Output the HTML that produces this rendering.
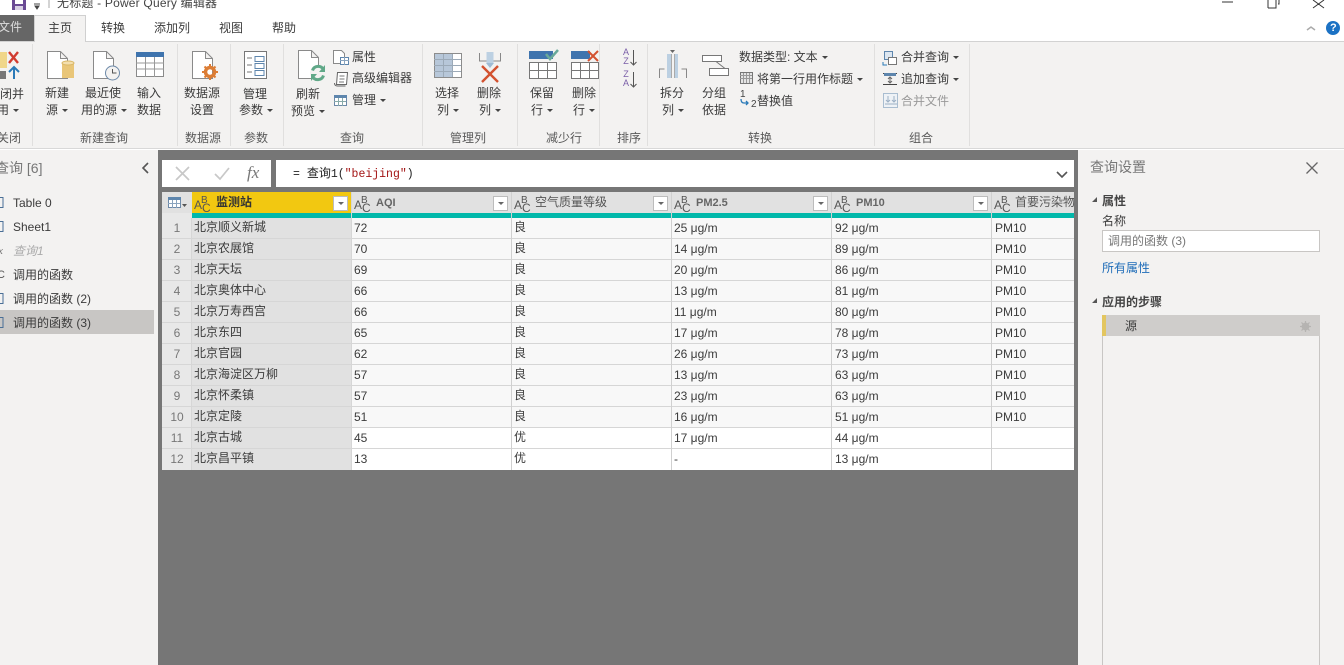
<!DOCTYPE html>
<html lang="zh"><head><meta charset="utf-8"><title>Power Query</title>
<style>
html,body{margin:0;padding:0;width:1344px;height:665px;overflow:hidden;background:#fff}
body{position:relative;font:12px/16px "Liberation Sans","Noto Sans CJK SC",sans-serif;color:#3b3b3b}
.a{position:absolute}
.t{position:absolute;white-space:nowrap}
.c{position:absolute;white-space:nowrap;transform:translateX(-50%)}
.g{color:#5a5a5a}
.sep{position:absolute;top:44px;height:102px;width:1px;background:#e0dfde}
svg{position:absolute;overflow:visible}
.abc{position:absolute;width:20px;height:18px;font-size:12px;color:#555}
.abc i{position:absolute;font-style:normal;line-height:11px}
.row{position:absolute;left:162px;width:912px;height:20px;border-bottom:1px solid #d6d6d6}
.drop{position:absolute;top:196px;width:15px;height:15px;background:#fff;border:1px solid #bcbcbc;box-sizing:border-box}
.drop:after{content:"";position:absolute;left:4px;top:5px;border:3px solid transparent;border-top:3px solid #666}
.tri{display:inline-block;border:3px solid transparent;border-top:3px solid #444;margin-left:4px;vertical-align:-1px}
</style></head><body>

<!-- title bar -->
<svg style="left:0;top:0" width="1344" height="15"><rect x="12" y="0" width="14" height="10" fill="#6a4a94"/><rect x="15" y="0" width="8" height="4" fill="#fff"/><rect x="15" y="6" width="8" height="4" fill="#d8d0e4"/><path d="M34 4h6M35 6l2 3 2-3z" stroke="#444" fill="#444"/><path d="M49 0v8" stroke="#aaa"/><path d="M1222 2h11M1268 8V0M1268 8h8V0M1278 4h1V0M1313 0l11 8M1324 0l-11 8" stroke="#333" fill="none"/></svg>
<div class="t" style="left:57px;top:-5px;font-size:12px;line-height:16px;color:#444;letter-spacing:.2px">无标题 - Power Query 编辑器</div>

<!-- tabs -->
<div class="a" style="left:0;top:15px;width:34px;height:26px;background:#666"></div>
<div class="t" style="left:-2px;top:19px;color:#ddd">文件</div>
<div class="a" style="left:34px;top:15px;width:52px;height:27px;background:#f3f2f1;border:1px solid #d0d0d0;border-bottom:0;box-sizing:border-box;z-index:2"></div>
<div class="t" style="left:48px;top:20px;z-index:3">主页</div>
<div class="t" style="left:101px;top:20px">转换</div>
<div class="t" style="left:154px;top:20px">添加列</div>
<div class="t" style="left:219px;top:20px">视图</div>
<div class="t" style="left:272px;top:20px">帮助</div>
<svg style="left:1300px;top:20px" width="44" height="20"><path d="M7 10l4-3 4 3" stroke="#aaa" stroke-width="1.5" fill="none"/><circle cx="33" cy="8" r="7" fill="#1c72c4"/></svg>
<div class="t" style="left:1330px;top:20px;color:#fff;font-weight:bold;font-size:11px">?</div>

<!-- ribbon -->
<div class="a" style="left:0;top:41px;width:1344px;height:108px;background:#f3f2f1;border-top:1px solid #d2d2d2;border-bottom:1px solid #d8d8d8;box-sizing:border-box"></div>
<div class="sep" style="left:32px"></div><div class="sep" style="left:177px"></div><div class="sep" style="left:230px"></div><div class="sep" style="left:283px"></div><div class="sep" style="left:422px"></div><div class="sep" style="left:517px"></div><div class="sep" style="left:599px"></div><div class="sep" style="left:647px"></div><div class="sep" style="left:874px"></div><div class="sep" style="left:969px"></div>

<svg style="left:0;top:42px" width="980" height="75" fill="none" stroke="#8a8a8a">
 <!-- close -->
 <rect x="0" y="10" width="7" height="16" fill="#f0d68a" stroke="none"/><rect x="0" y="29" width="6" height="8" fill="#777" stroke="none"/>
 <path d="M9 10l9 11M18 10l-9 11" stroke="#d13c30" stroke-width="2.4"/>
 <path d="M14 37V26M9 30l5-5 5 5" stroke="#2a7ab8" stroke-width="2"/>
 <!-- new source -->
 <path d="M47.500 9.500h13l7 7v20h-20zM60.500 9.500v7h7" fill="#fff"/><path d="M62 21h12v15H62z" fill="#e9c678" stroke="none"/><ellipse cx="68" cy="21" rx="6" ry="2" fill="#f4dfae" stroke="#d9b766"/>
 <!-- recent -->
 <path d="M93.500 9.500h13l7 7v20h-20zM106.500 9.500v7h7" fill="#fff"/><circle cx="112.500" cy="31" r="7" fill="#f3f2f1" stroke="#6d89a8"/><path d="M112.500 27v4h4" stroke="#555"/>
 <!-- enter data -->
 <rect x="136.500" y="10.500" width="27" height="24" fill="#fff"/><rect x="136" y="10" width="28" height="5" fill="#3f74ae" stroke="none"/><path d="M136 21h28M136 27h28M145.500 15v20M154.500 15v20" stroke="#999"/>
 <!-- datasource -->
 <path d="M192.500 9.500h13l7 7v20h-20zM205.500 9.500v7h7" fill="#fff"/><circle cx="210" cy="30" r="4.500" stroke="#dc7d35" stroke-width="3.500"/><path d="M210 22v3M210 35v3M202 30h3M215 30h3M204.500 24.500l2 2M213.500 33.500l2 2M204.500 35.500l2-2M213.500 26.500l2-2" stroke="#dc7d35" stroke-width="2"/>
 <!-- params -->
 <rect x="244.500" y="9.500" width="22" height="27" fill="#fff" stroke="#777"/><path d="M255 14.500h9v5h-9zM255 21.500h9v5h-9zM255 28.500h9v5h-9z" stroke="#5e86ad"/><path d="M247 16h5M247 23h5M247 30h5" stroke="#777"/>
 <!-- refresh -->
 <path d="M298.500 8.500h13l7 7v21h-20zM311.500 8.500v7h7" fill="#fff"/><circle cx="318" cy="31" r="8" fill="#f3f2f1" stroke="none"/><path d="M312.500 28.500a6 6 0 0 1 11-1M323.500 33.500a6 6 0 0 1-11 1" stroke="#60a888" stroke-width="3"/><path d="M325 23v7h-6zM311 39v-7h6z" fill="#60a888" stroke="none"/>
 <!-- properties -->
 <path d="M333.500 8.500h8l3 3v10h-11z" fill="#fff"/><rect x="340.500" y="15.500" width="8" height="7" fill="#fff" stroke="#5e86ad"/><path d="M340 18.500h9M344.500 15v8" stroke="#8aa4be"/>
 <!-- advanced editor -->
 <path d="M337.500 30.500h10l-1 12h-10z" fill="#fff" stroke="#666"/><path d="M334.500 41c0 2 1 3 3 3h8" stroke="#666"/><path d="M339.500 34h5M339.500 37h5M339 40h5" stroke="#777"/>
 <!-- manage -->
 <rect x="334.500" y="53.500" width="12" height="10" fill="#fff" stroke="#6d89a8"/><rect x="334" y="53" width="13" height="3" fill="#5e86ad" stroke="none"/><path d="M338.500 56v8M342.500 56v8M334 59.500h12" stroke="#8aa"/>
 <!-- choose columns -->
 <rect x="434.500" y="11.500" width="27" height="24" fill="#fff" stroke="#8c8c8c"/><rect x="435" y="12" width="17" height="23" fill="#b7c7d9" stroke="none"/><path d="M434 17.500h27M434 23.500h27M434 29.500h27M443.500 12v23M452.500 12v23" stroke="#9caab8"/>
 <!-- remove columns -->
 <path d="M479.500 11v8h21v-8" stroke="#888"/><path d="M490 10v11" stroke="#bcd0e2" stroke-width="7"/><path d="M486 21l4 5 4-5" fill="#9fbbd4" stroke="none"/><path d="M482 40l16-16M482 24l16 16" stroke="#d35230" stroke-width="2.400"/>
 <!-- keep rows -->
 <rect x="529" y="9" width="24" height="8" fill="#3f74ae" stroke="none"/><path d="M546 12l4 5 8-9" stroke="#69a99a" stroke-width="2.500"/><rect x="529.500" y="20.500" width="27" height="16" fill="#fff" stroke="#777"/><path d="M529 28.500h27M538.500 20v16M547.500 20v16" stroke="#777"/>
 <!-- remove rows -->
 <rect x="571" y="9" width="19" height="8" fill="#3f74ae" stroke="none"/><path d="M588 9l10 10M598 9l-10 10" stroke="#d35230" stroke-width="2"/><rect x="571.500" y="20.500" width="27" height="16" fill="#fff" stroke="#777"/><path d="M571 28.500h27M580.500 20v16M589.500 20v16" stroke="#777"/>
 <!-- sort arrows -->
 <path d="M633.500 8v15M630.500 20l3 3 3-3M633.500 30v15M630.500 42l3 3 3-3" stroke="#555"/>
 <!-- split -->
 <path d="M659.500 36V27h5M686.500 36V27h-5" stroke="#888"/><rect x="667" y="12" width="4" height="24" fill="#bcd0e2" stroke="none"/><rect x="674" y="12" width="4" height="24" fill="#bcd0e2" stroke="none"/><path d="M671.500 12v24M674.500 12v24" stroke="#aaa"/><path d="M670 8h5l-2.500 3z" fill="#666" stroke="none"/>
 <!-- group -->
 <rect x="702.500" y="13.500" width="19" height="6" fill="#fff" stroke="#777"/><rect x="709.500" y="26.500" width="19" height="7" fill="#fff" stroke="#777"/><path d="M716 19.500l9 7" stroke="#777"/>
 <!-- first row header -->
 <rect x="740.500" y="30.500" width="12" height="11" fill="#e4e4e4" stroke="#777"/><path d="M740 33.500h12M743.500 31v10M746.500 31v10M749.500 31v10M740 36.500h12" stroke="#999"/>
 <path d="M741 57c0 3 1 4 3 4h4M746 59l2 2-2 2" stroke="#2a7ab8" stroke-width="1.300"/>
 <!-- combine -->
 <rect x="884.500" y="9.500" width="8" height="8" stroke="#5e86ad" fill="#dce6f0"/><rect x="888.500" y="15.500" width="8" height="7" stroke="#777" fill="#fff"/><path d="M883 20v3h4" stroke="#2a7ab8"/>
 <path d="M883 31.500h14M883 42.500h14" stroke="#444"/><rect x="884" y="31" width="12" height="3" fill="#5e86ad" stroke="none"/><path d="M890 35v6M888 37l2-2 2 2M888 39l2 2 2-2" stroke="#666"/>
 <rect x="883.500" y="51.500" width="14" height="14" stroke="#a9bdd0" fill="#eef2f6"/><path d="M888 54v6M886 58l2 2 2-2M894 54v6M892 58l2 2 2-2M885 62h12" stroke="#9cb0c4"/>
</svg>

<!-- large button labels -->
<div class="t" style="left:0;top:86px">闭并</div><div class="t" style="left:-3px;top:102px">用<i class="tri"></i></div>
<div class="c" style="left:57px;top:85px">新建</div><div class="c" style="left:57px;top:102px">源<i class="tri"></i></div>
<div class="c" style="left:103px;top:85px">最近使</div><div class="c" style="left:104px;top:102px">用的源<i class="tri"></i></div>
<div class="c" style="left:149px;top:85px">输入</div><div class="c" style="left:149px;top:102px">数据</div>
<div class="c" style="left:202px;top:85px">数据源</div><div class="c" style="left:202px;top:102px">设置</div>
<div class="c" style="left:255px;top:86px">管理</div><div class="c" style="left:256px;top:102px">参数<i class="tri"></i></div>
<div class="c" style="left:308px;top:86px">刷新</div><div class="c" style="left:308px;top:103px">预览<i class="tri"></i></div>
<div class="t" style="left:352px;top:49px">属性</div>
<div class="t" style="left:352px;top:70px">高级编辑器</div>
<div class="t" style="left:352px;top:92px">管理<i class="tri"></i></div>
<div class="c" style="left:447px;top:85px">选择</div><div class="c" style="left:448px;top:102px">列<i class="tri"></i></div>
<div class="c" style="left:489px;top:85px">删除</div><div class="c" style="left:490px;top:102px">列<i class="tri"></i></div>
<div class="c" style="left:542px;top:85px">保留</div><div class="c" style="left:542px;top:102px">行<i class="tri"></i></div>
<div class="c" style="left:584px;top:85px">删除</div><div class="c" style="left:584px;top:102px">行<i class="tri"></i></div>
<div class="c" style="left:672px;top:85px">拆分</div><div class="c" style="left:673px;top:102px">列<i class="tri"></i></div>
<div class="c" style="left:714px;top:85px">分组</div><div class="c" style="left:714px;top:102px">依据</div>
<div class="t" style="left:739px;top:49px">数据类型: 文本<i class="tri"></i></div>
<div class="t" style="left:757px;top:71px">将第一行用作标题<i class="tri"></i></div>
<div class="t" style="left:757px;top:93px">替换值</div>
<div class="t" style="left:740px;top:89px;font-size:10px;line-height:12px;color:#444">1</div><div class="t" style="left:751px;top:99px;font-size:10px;line-height:12px;color:#444">2</div>
<div class="t" style="left:901px;top:49px">合并查询<i class="tri"></i></div>
<div class="t" style="left:901px;top:71px">追加查询<i class="tri"></i></div>
<div class="t" style="left:901px;top:93px;color:#999">合并文件</div>
<div class="t" style="left:622px;top:48px;font-size:9px;line-height:9px;color:#7a5ea8;width:8px;text-align:center">A<br>Z</div>
<div class="t" style="left:622px;top:70px;font-size:9px;line-height:9px;color:#7a5ea8;width:8px;text-align:center">Z<br>A</div>

<!-- group labels -->
<div class="t g" style="left:-3px;top:130px">关闭</div>
<div class="c g" style="left:104px;top:130px">新建查询</div>
<div class="c g" style="left:203px;top:130px">数据源</div>
<div class="c g" style="left:256px;top:130px">参数</div>
<div class="c g" style="left:352px;top:130px">查询</div>
<div class="c g" style="left:468px;top:130px">管理列</div>
<div class="c g" style="left:564px;top:130px">减少行</div>
<div class="c g" style="left:629px;top:130px">排序</div>
<div class="c g" style="left:760px;top:130px">转换</div>
<div class="c g" style="left:921px;top:130px">组合</div>

<!-- left pane -->
<div class="a" style="left:0;top:150px;width:158px;height:515px;background:#f3f2f1"></div>
<div class="t" style="left:-5px;top:159px;font-size:14px;line-height:18px;color:#777">查询 [6]</div>
<svg style="left:140px;top:162px" width="10" height="12"><path d="M8 1L3 6l5 5" stroke="#555" stroke-width="1.600" fill="none"/></svg>
<div class="a" style="left:0;top:310px;width:154px;height:24px;background:#c8c6c4"></div>
<svg style="left:0;top:195px" width="10" height="140" fill="none" stroke="#4a6f96">
 <path d="M-1 2.500h4v10h-4M-1 26.500h4v10h-4M-1 98.500h4v10h-4M-1 122.500h4v10h-4"/>
</svg>
<div class="t" style="left:-2px;top:244px;font:italic 11px/14px 'Liberation Serif',serif;color:#777">x</div>
<div class="t" style="left:-3px;top:268px;font-size:11px;line-height:14px;color:#555">C</div>
<div class="t" style="left:13px;top:195px">Table 0</div>
<div class="t" style="left:13px;top:219px">Sheet1</div>
<div class="t" style="left:13px;top:243px;color:#aaa;font-style:italic">查询1</div>
<div class="t" style="left:13px;top:267px">调用的函数</div>
<div class="t" style="left:13px;top:291px">调用的函数 (2)</div>
<div class="t" style="left:13px;top:315px">调用的函数 (3)</div>

<!-- center -->
<div class="a" style="left:158px;top:150px;width:920px;height:515px;background:#767676"></div>
<div class="a" style="left:162px;top:160px;width:109px;height:27px;background:#fff"></div>
<div class="a" style="left:276px;top:160px;width:798px;height:27px;background:#fff"></div>
<svg style="left:162px;top:160px" width="109" height="27" fill="none" stroke="#c8c8c8" stroke-width="1.700"><path d="M14 7l13 13M27 7L14 20M53 14l5 5 9-11"/></svg>
<div class="t" style="left:247px;top:163px;font:italic 17px/20px 'Liberation Serif',serif;color:#777">fx</div>
<div class="t" style="left:293px;top:166px;font:11.500px/16px 'Liberation Mono','Noto Sans CJK SC',monospace;color:#222">= <span style="font-size:12px">查询</span>1(<span style="color:#a31515">"beijing"</span>)</div>
<svg style="left:1055px;top:170px" width="14" height="10"><path d="M2 2l5 5 5-5" stroke="#555" stroke-width="1.600" fill="none"/></svg>

<!-- table -->
<div class="a" style="left:162px;top:192px;width:912px;height:278px;background:#fff"></div>
<div class="a" style="left:162px;top:192px;width:912px;height:21px;background:#e1e1e1"></div>
<div class="a" style="left:192px;top:192px;width:159px;height:21px;background:#f2c811"></div>
<div class="a" style="left:192px;top:213px;width:882px;height:5px;background:#01b8aa"></div>
<div class="a" style="left:162px;top:213px;width:30px;height:257px;background:#e8e8e8"></div>
<div class="a" style="left:192px;top:218px;width:159px;height:252px;background:#e1e1e1"></div>
<div class="a" style="left:352px;top:218px;width:722px;height:210px;background:#f8f8f8"></div>

<div class="row" style="top:218px"></div><div class="row" style="top:239px"></div><div class="row" style="top:260px"></div><div class="row" style="top:281px"></div><div class="row" style="top:302px"></div><div class="row" style="top:323px"></div><div class="row" style="top:344px"></div><div class="row" style="top:365px"></div><div class="row" style="top:386px"></div><div class="row" style="top:407px"></div><div class="row" style="top:428px"></div><div class="row" style="top:449px;border:0"></div>

<div class="a" style="left:191px;top:218px;width:1px;height:252px;background:#d6d6d6"></div>
<div class="a" style="left:351px;top:192px;width:1px;height:278px;background:#d6d6d6"></div>
<div class="a" style="left:511px;top:192px;width:1px;height:278px;background:#d0d0d0"></div>
<div class="a" style="left:671px;top:192px;width:1px;height:278px;background:#d0d0d0"></div>
<div class="a" style="left:831px;top:192px;width:1px;height:278px;background:#d0d0d0"></div>
<div class="a" style="left:991px;top:192px;width:1px;height:278px;background:#d0d0d0"></div>

<!-- header -->
<svg style="left:168px;top:197px" width="20" height="12"><rect x=".5" y=".5" width="12" height="10" fill="#fff" stroke="#6d89a8"/><rect x="0" y="0" width="13" height="3" fill="#5e86ad"/><path d="M4.500 3v8M8.500 3v8M0 6.500h12" stroke="#8aa4be"/><path d="M14 7h5l-2.500 3z" fill="#555"/></svg>

<div class="abc" style="left:194px;top:194px"><i style="left:0;top:6px">A</i><i style="left:7px;top:1px;font-size:10px">B</i><i style="left:8px;top:9px">C</i></div>
<div class="abc" style="left:354px;top:194px"><i style="left:0;top:6px">A</i><i style="left:7px;top:1px;font-size:10px">B</i><i style="left:8px;top:9px">C</i></div>
<div class="abc" style="left:514px;top:194px"><i style="left:0;top:6px">A</i><i style="left:7px;top:1px;font-size:10px">B</i><i style="left:8px;top:9px">C</i></div>
<div class="abc" style="left:674px;top:194px"><i style="left:0;top:6px">A</i><i style="left:7px;top:1px;font-size:10px">B</i><i style="left:8px;top:9px">C</i></div>
<div class="abc" style="left:834px;top:194px"><i style="left:0;top:6px">A</i><i style="left:7px;top:1px;font-size:10px">B</i><i style="left:8px;top:9px">C</i></div>
<div class="abc" style="left:994px;top:194px"><i style="left:0;top:6px">A</i><i style="left:7px;top:1px;font-size:10px">B</i><i style="left:8px;top:9px">C</i></div>

<div class="t" style="left:216px;top:194px;font-weight:bold;color:#333">监测站</div>
<div class="t" style="left:376px;top:195px;font-size:11px;font-weight:bold;color:#666">AQI</div>
<div class="t" style="left:535px;top:194px;color:#555">空气质量等级</div>
<div class="t" style="left:696px;top:195px;font-size:11px;font-weight:bold;color:#666">PM2.5</div>
<div class="t" style="left:856px;top:195px;font-size:11px;font-weight:bold;color:#666">PM10</div>
<div class="a" style="left:1015px;top:194px;width:59px;height:18px;overflow:hidden"><span class="t" style="left:0;top:0;color:#555">首要污染物</span></div>
<div class="drop" style="left:333px"></div><div class="drop" style="left:493px"></div><div class="drop" style="left:653px"></div><div class="drop" style="left:813px"></div><div class="drop" style="left:973px"></div>

<!-- row numbers -->
<div class="c g" style="left:177px;top:220px;color:#777">1</div><div class="c g" style="left:177px;top:241px;color:#777">2</div><div class="c g" style="left:177px;top:262px;color:#777">3</div><div class="c g" style="left:177px;top:283px;color:#777">4</div><div class="c g" style="left:177px;top:304px;color:#777">5</div><div class="c g" style="left:177px;top:325px;color:#777">6</div><div class="c g" style="left:177px;top:346px;color:#777">7</div><div class="c g" style="left:177px;top:367px;color:#777">8</div><div class="c g" style="left:177px;top:388px;color:#777">9</div><div class="c g" style="left:177px;top:409px;color:#777">10</div><div class="c g" style="left:177px;top:430px;color:#777">11</div><div class="c g" style="left:177px;top:451px;color:#777">12</div>

<!-- name col -->
<div class="t" style="left:194px;top:219px">北京顺义新城</div><div class="t" style="left:194px;top:240px">北京农展馆</div><div class="t" style="left:194px;top:261px">北京天坛</div><div class="t" style="left:194px;top:282px">北京奥体中心</div><div class="t" style="left:194px;top:303px">北京万寿西宫</div><div class="t" style="left:194px;top:324px">北京东四</div><div class="t" style="left:194px;top:345px">北京官园</div><div class="t" style="left:194px;top:366px">北京海淀区万柳</div><div class="t" style="left:194px;top:387px">北京怀柔镇</div><div class="t" style="left:194px;top:408px">北京定陵</div><div class="t" style="left:194px;top:429px">北京古城</div><div class="t" style="left:194px;top:450px">北京昌平镇</div>

<!-- AQI -->
<div class="t" style="left:354px;top:220px">72</div><div class="t" style="left:354px;top:241px">70</div><div class="t" style="left:354px;top:262px">69</div><div class="t" style="left:354px;top:283px">66</div><div class="t" style="left:354px;top:304px">66</div><div class="t" style="left:354px;top:325px">65</div><div class="t" style="left:354px;top:346px">62</div><div class="t" style="left:354px;top:367px">57</div><div class="t" style="left:354px;top:388px">57</div><div class="t" style="left:354px;top:409px">51</div><div class="t" style="left:354px;top:430px">45</div><div class="t" style="left:354px;top:451px">13</div>

<!-- grade -->
<div class="t" style="left:514px;top:219px">良</div><div class="t" style="left:514px;top:240px">良</div><div class="t" style="left:514px;top:261px">良</div><div class="t" style="left:514px;top:282px">良</div><div class="t" style="left:514px;top:303px">良</div><div class="t" style="left:514px;top:324px">良</div><div class="t" style="left:514px;top:345px">良</div><div class="t" style="left:514px;top:366px">良</div><div class="t" style="left:514px;top:387px">良</div><div class="t" style="left:514px;top:408px">良</div><div class="t" style="left:514px;top:429px">优</div><div class="t" style="left:514px;top:450px">优</div>

<!-- PM2.5 -->
<div class="t" style="left:674px;top:220px">25 μg/m</div><div class="t" style="left:674px;top:241px">14 μg/m</div><div class="t" style="left:674px;top:262px">20 μg/m</div><div class="t" style="left:674px;top:283px">13 μg/m</div><div class="t" style="left:674px;top:304px">11 μg/m</div><div class="t" style="left:674px;top:325px">17 μg/m</div><div class="t" style="left:674px;top:346px">26 μg/m</div><div class="t" style="left:674px;top:367px">13 μg/m</div><div class="t" style="left:674px;top:388px">23 μg/m</div><div class="t" style="left:674px;top:409px">16 μg/m</div><div class="t" style="left:674px;top:430px">17 μg/m</div><div class="t" style="left:674px;top:451px">-</div>

<!-- PM10 -->
<div class="t" style="left:835px;top:220px">92 μg/m</div><div class="t" style="left:835px;top:241px">89 μg/m</div><div class="t" style="left:835px;top:262px">86 μg/m</div><div class="t" style="left:835px;top:283px">81 μg/m</div><div class="t" style="left:835px;top:304px">80 μg/m</div><div class="t" style="left:835px;top:325px">78 μg/m</div><div class="t" style="left:835px;top:346px">73 μg/m</div><div class="t" style="left:835px;top:367px">63 μg/m</div><div class="t" style="left:835px;top:388px">63 μg/m</div><div class="t" style="left:835px;top:409px">51 μg/m</div><div class="t" style="left:835px;top:430px">44 μg/m</div><div class="t" style="left:835px;top:451px">13 μg/m</div>

<!-- primary pollutant -->
<div class="t" style="left:995px;top:220px">PM10</div><div class="t" style="left:995px;top:241px">PM10</div><div class="t" style="left:995px;top:262px">PM10</div><div class="t" style="left:995px;top:283px">PM10</div><div class="t" style="left:995px;top:304px">PM10</div><div class="t" style="left:995px;top:325px">PM10</div><div class="t" style="left:995px;top:346px">PM10</div><div class="t" style="left:995px;top:367px">PM10</div><div class="t" style="left:995px;top:388px">PM10</div><div class="t" style="left:995px;top:409px">PM10</div>

<!-- right pane -->
<div class="a" style="left:1078px;top:150px;width:266px;height:515px;background:#f3f2f1"></div>
<div class="t" style="left:1090px;top:158px;font-size:14px;line-height:18px;color:#777">查询设置</div>
<svg style="left:1305px;top:161px" width="14" height="14"><path d="M1.500 1.500l11 11M12.500 1.500l-11 11" stroke="#666" stroke-width="1.300"/></svg>
<svg style="left:1090px;top:196px" width="10" height="112"><path d="M7 1v5H2zM7 102v5H2z" fill="#555"/></svg>
<div class="t" style="left:1102px;top:193px;font-weight:bold;color:#444">属性</div>
<div class="t" style="left:1102px;top:213px">名称</div>
<div class="a" style="left:1102px;top:230px;width:218px;height:22px;background:#fff;border:1px solid #c8c6c4;box-sizing:border-box"></div>
<div class="t" style="left:1108px;top:233px;color:#777">调用的函数 (3)</div>
<div class="t" style="left:1102px;top:260px;color:#1e6cb8">所有属性</div>
<div class="t" style="left:1102px;top:294px;font-weight:bold;color:#444">应用的步骤</div>
<div class="a" style="left:1102px;top:315px;width:218px;height:350px;background:#f3f2f1;border:1px solid #c8c6c4;border-bottom:0;box-sizing:border-box"></div>
<div class="a" style="left:1102px;top:315px;width:218px;height:21px;background:#cfcdcb"></div>
<div class="a" style="left:1102px;top:315px;width:4px;height:21px;background:#e3c660"></div>
<div class="t" style="left:1125px;top:318px">源</div>
<svg style="left:1300px;top:321px" width="11" height="11"><circle cx="5.500" cy="5.500" r="2.800" fill="none" stroke="#b5b3b1" stroke-width="2.200"/><path d="M5.500 0v11M0 5.500h11M1.500 1.500l8 8M9.500 1.500l-8 8" stroke="#b5b3b1" stroke-width="1.200"/></svg>

</body></html>
